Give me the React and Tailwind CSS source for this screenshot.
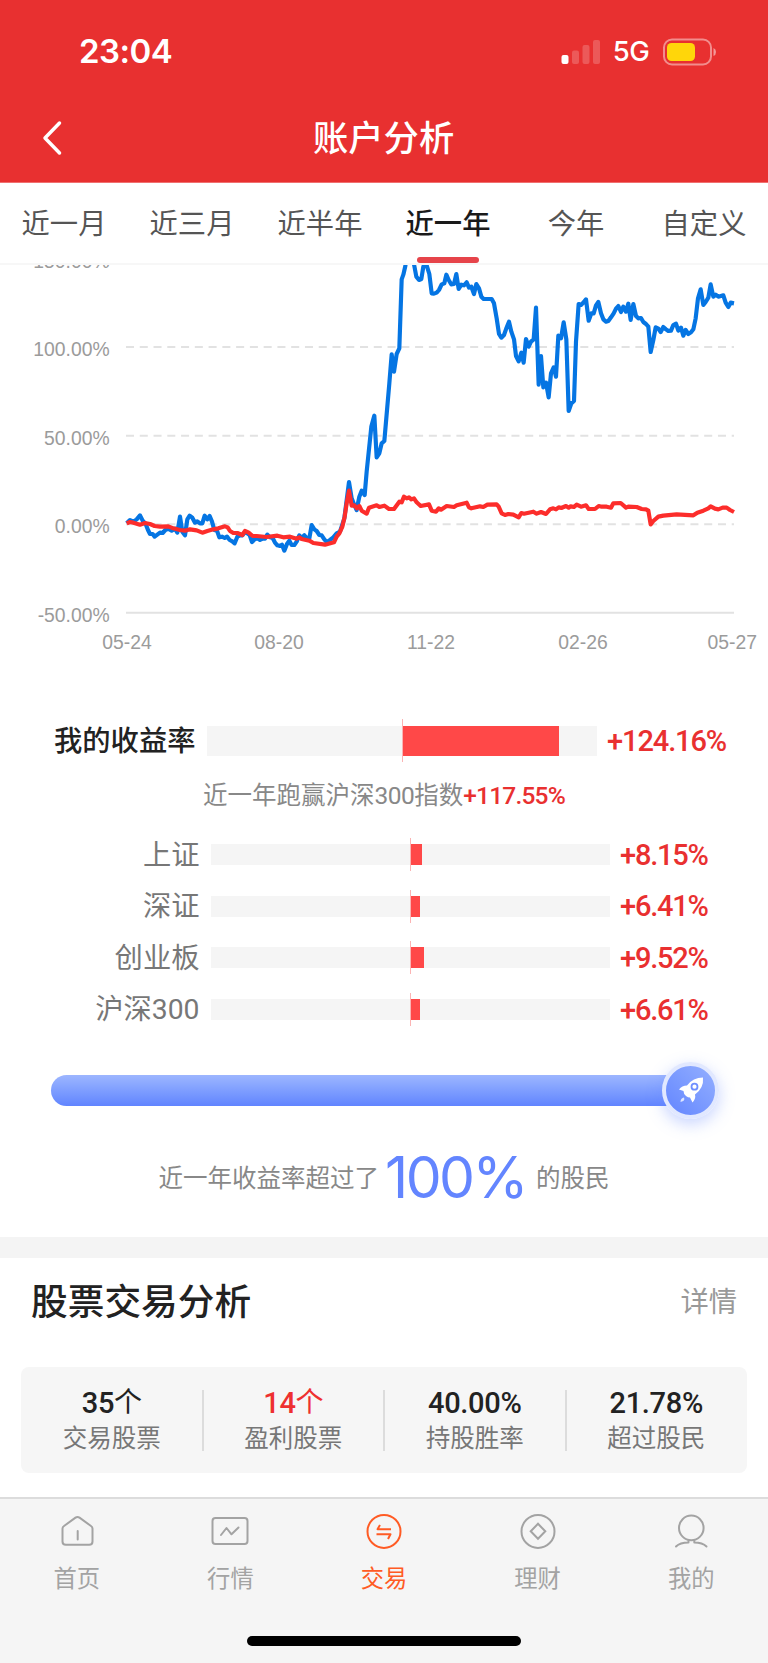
import React, { useState } from "react";

const TABS = ["近一月", "近三月", "近半年", "近一年", "今年", "自定义"];

const INDEXES = [
  { name: "上证", value: "+8.15%", width: 10 },
  { name: "深证", value: "+6.41%", width: 8 },
  { name: "创业板", value: "+9.52%", width: 12 },
  { name: "沪深300", value: "+6.61%", width: 8 },
];

const STATS = [
  { value: "35", unit: "个", label: "交易股票" },
  { value: "14", unit: "个", label: "盈利股票", red: true },
  { value: "40.00%", label: "持股胜率" },
  { value: "21.78%", label: "超过股民" },
];

// chart lines, 3 units = 1px
const MY_LINE =
  "380,820 390,810 400,815 410,808 420,796 428,812 437,822 444,840 450,852 458,852 464,860 472,854 480,848 488,849 496,840 505,836 515,842 525,836 532,848 540,800 547,845 555,856 562,808 569,797 577,803 585,818 592,814 600,820 607,820 614,797 622,808 629,798 636,815 643,840 651,842 658,862 666,860 674,864 681,860 689,870 697,874 704,880 712,860 720,856 727,856 735,846 742,850 749,855 756,876 764,868 772,865 780,870 788,866 795,866 802,854 810,862 818,864 825,878 832,886 840,888 846,884 853,902 861,882 868,872 875,885 883,885 890,875 898,856 905,864 913,856 922,866 928,865 935,825 943,838 950,843 958,855 965,856 973,868 980,876 990,870 1000,862 1010,850 1020,845 1033,805 1047,696 1055,745 1063,765 1070,780 1078,740 1085,722 1094,735 1100,665 1114,530 1123,497 1130,622 1138,610 1145,580 1153,573 1168,400 1175,313 1182,365 1190,312 1198,295 1205,88 1210,74 1216,48 1220,20 1238,20 1243,48 1249,80 1257,90 1264,87 1270,50 1274,40 1280,46 1288,72 1295,130 1302,131 1310,128 1317,120 1325,103 1333,100 1339,74 1346,90 1354,103 1362,102 1369,72 1376,117 1384,104 1392,106 1400,97 1407,113 1414,110 1422,132 1429,102 1437,115 1444,140 1451,147 1475,147 1482,160 1490,205 1497,252 1504,263 1512,255 1519,235 1527,215 1534,245 1542,268 1548,318 1556,334 1564,308 1571,338 1578,267 1586,290 1593,275 1601,268 1608,173 1616,404 1623,318 1630,412 1638,398 1646,442 1653,370 1661,352 1668,380 1675,257 1683,265 1691,217 1699,268 1706,483 1714,460 1722,453 1728,275 1736,162 1743,165 1751,157 1758,148 1766,212 1774,190 1781,190 1788,166 1795,156 1803,190 1810,208 1818,215 1825,213 1833,202 1841,190 1848,176 1855,168 1863,186 1870,170 1878,185 1885,161 1892,210 1900,162 1908,198 1915,205 1923,204 1930,216 1938,222 1945,230 1952,306 1960,270 1967,232 1975,236 1982,246 1990,231 1998,238 2005,243 2013,242 2020,225 2028,221 2035,242 2043,233 2050,257 2057,240 2065,252 2073,247 2080,238 2087,205 2094,145 2102,118 2110,165 2117,156 2125,143 2132,103 2140,140 2147,134 2155,140 2170,136 2177,158 2185,171 2192,158 2202,160";

const INDEX_LINE =
  "380,820 390,816 400,818 420,824 435,819 450,822 464,828 480,830 505,829 520,835 540,840 555,842 570,838 590,841 607,848 622,843 640,838 655,835 675,829 683,832 690,843 700,849 712,849 727,855 735,843 745,847 758,858 770,858 800,861 832,857 850,862 870,860 890,866 898,862 905,867 928,872 940,879 975,884 1002,877 1010,860 1018,850 1027,830 1034,800 1040,760 1047,722 1055,767 1063,766 1070,775 1078,768 1085,782 1100,791 1107,773 1130,766 1138,771 1153,767 1167,777 1182,777 1198,755 1205,757 1212,740 1220,745 1227,742 1234,748 1242,745 1250,757 1262,768 1287,763 1295,782 1308,785 1316,775 1323,779 1340,768 1362,771 1370,766 1400,758 1407,772 1414,775 1440,769 1450,771 1462,764 1490,763 1496,770 1505,790 1515,795 1525,792 1540,794 1556,802 1564,789 1572,791 1600,785 1610,791 1623,786 1638,792 1650,778 1660,775 1668,778 1676,772 1684,774 1698,768 1706,773 1712,769 1722,771 1730,764 1743,770 1758,766 1766,777 1785,777 1796,768 1805,770 1820,770 1833,773 1840,760 1862,759 1878,773 1885,770 1910,771 1925,777 1938,778 1945,782 1952,823 1960,813 1975,800 1990,797 2030,793 2080,796 2092,788 2110,782 2125,775 2132,769 2145,776 2155,778 2168,773 2180,773 2190,780 2202,786";

function StatusBar() {
  return (
    <div className="flex h-[94px] items-center pl-[79px] pr-[51px] pt-[9px] text-white">
      <span className="font-['Inter'] text-[33px] font-semibold leading-none tracking-[-0.5px]">23:04</span>
      <svg className="ml-auto" width="40" height="26" viewBox="0 0 40 26" fill="#fff">
        <rect x="0.5" y="16" width="7" height="9" rx="2" />
        <rect x="11" y="11.500" width="7" height="13.500" rx="2" opacity=".2" />
        <rect x="21.500" y="6" width="7" height="19" rx="2" opacity=".2" />
        <rect x="32" y="1" width="7" height="24" rx="2" opacity=".2" />
      </svg>
      <span className="ml-[12px] font-['Inter'] text-[27.500px] font-medium leading-none tracking-[-0.7px]">5G</span>
      <svg className="ml-[14px]" width="54" height="28" viewBox="0 0 54 28">
        <rect x="1" y="1.500" width="47" height="25" rx="8" fill="none" stroke="#fff" strokeWidth="2" opacity=".45" />
        <rect x="4" y="5" width="28" height="18" rx="4.500" fill="#ffd60a" />
        <path d="M50.500 10 Q53 11 53 14 T50.500 18Z" fill="#fff" opacity=".5" />
      </svg>
    </div>
  );
}

function Chart() {
  return (
    <svg className="block" width="768" height="395" viewBox="0 45 2304 1185" fontFamily="Liberation Sans, Arial, sans-serif" fontSize="58" fill="#9b9b9b">
      <g textAnchor="end">
        <text x="329" y="54">150.00%</text>
        <text x="329" y="318">100.00%</text>
        <text x="329" y="584">50.00%</text>
        <text x="329" y="850">0.00%</text>
        <text x="329" y="1116">-50.00%</text>
      </g>
      <g stroke="#e2e2e2" strokeWidth="6" strokeDasharray="24 17.300">
        <path d="M378 291H2202" />
        <path d="M378 557H2202" />
        <path d="M378 823H2202" />
      </g>
      <path d="M378 1088H2202" stroke="#e2e2e2" strokeWidth="6" />
      <g textAnchor="middle">
        <text x="381" y="1198">05-24</text>
        <text x="837" y="1198">08-20</text>
        <text x="1293" y="1198">11-22</text>
        <text x="1749" y="1198">02-26</text>
        <text x="2197" y="1198">05-27</text>
      </g>
      <g fill="none" strokeWidth="12.500" strokeLinejoin="round">
        <polyline points={MY_LINE} stroke="#0575e3" />
        <polyline points={INDEX_LINE} stroke="#fc2d2b" />
      </g>
    </svg>
  );
}

function IndexRow({ name, value, width }) {
  return (
    <div className="flex h-[51.600px] items-center">
      <span className="w-[199.500px] pt-[2px] text-right text-[28.300px] leading-none text-[#777]">{name}</span>
      <div className="ml-[11.500px] flex h-[33px] w-[399px] items-center bg-[linear-gradient(#f5f5f5,#f5f5f5)] bg-[length:100%_21px] bg-center bg-no-repeat">
        <div className="ml-[199px] h-[33px] w-px bg-[#fbb4b4]" />
        <div className="h-[21px] bg-[#ff4848]" style={{ width: width + 1 }} />
      </div>
      <span className="ml-[10px] pt-px text-[29px] font-medium leading-none tracking-[-1.2px] text-[#e93030]">{value}</span>
    </div>
  );
}

function NavIcon({ name }) {
  return (
    <svg width="40" height="40" viewBox="0 0 40 40" fill="none" stroke="currentColor" strokeWidth="2" strokeLinecap="round" strokeLinejoin="round">
      {name === "首页" && (
        <>
          <path d="M5.500 17.500Q5.500 16 7 15L18.500 6.600Q20.500 5.200 22.500 6.600L34 15Q35.500 16 35.500 17.500V30.500Q35.500 33.800 32.200 33.800H8.800Q5.500 33.800 5.500 30.500Z" />
          <path d="M20.700 20V28.500" />
        </>
      )}
      {name === "行情" && (
        <>
          <rect x="2.500" y="7" width="35" height="26" rx="3" />
          <path d="M11 24L16.500 17L21.500 23.300L28.500 16.500" />
        </>
      )}
      {name === "交易" && (
        <>
          <circle cx="20" cy="20.400" r="16.500" />
          <path d="M16 14L13.500 18.200H27" strokeLinecap="butt" />
          <path d="M12.500 23.300H26.500L24 28" strokeLinecap="butt" />
        </>
      )}
      {name === "理财" && (
        <>
          <circle cx="20" cy="20.400" r="16.500" />
          <path d="M20 12.800L27.300 20.300L20 27.800L12.700 20.300Z" strokeLinejoin="miter" />
        </>
      )}
      {name === "我的" && (
        <>
          <circle cx="20.300" cy="16.900" r="12.300" />
          <path d="M17.500 29.200V31.500Q9 31.500 5 35.500M23.300 29.200V31.500Q31.500 31.500 35.500 35.500" />
        </>
      )}
    </svg>
  );
}

function App() {
  const [tab, setTab] = useState("近一年");
  const [nav, setNav] = useState("交易");

  return (
    <div className="flex h-[1663px] w-[768px] flex-col overflow-hidden bg-white font-['Roboto','Noto_Sans_CJK_SC',sans-serif]">
      {/* Header */}
      <header className="h-[183px] shrink-0 border-b border-[#f07070] bg-[#e83030]">
        <StatusBar />
        <div className="flex h-[88px] items-center pl-[42px] text-white">
          <svg width="20" height="36" viewBox="0 0 20 36" fill="none" stroke="#fff" strokeWidth="3.500" strokeLinecap="round" strokeLinejoin="round">
            <path d="M17.500 3L3 18L17.500 33" />
          </svg>
          <h1 className="ml-[251px] pt-[3px] text-[35.300px] font-medium leading-none">账户分析</h1>
        </div>
      </header>

      {/* Range tabs */}
      <div className="flex h-[82px] shrink-0 border-b-2 border-[#f7f7f7]">
        {TABS.map((t) => (
          <button
            key={t}
            onClick={() => setTab(t)}
            className={`flex w-[128px] flex-col items-center text-[28.300px] leading-[84px] ${t === tab ? "font-medium text-[#1a1a1a]" : "text-[#555]"}`}
          >
            <span className="h-[74px]">{t}</span>
            {t === tab && <span className="h-[6px] w-[62px] rounded-full bg-[#e6444a]" />}
          </button>
        ))}
      </div>

      <Chart />

      {/* Yield compare */}
      <section className="h-[577px] shrink-0 pt-[58px]">
        <div className="flex h-[45px] items-center">
          <span className="w-[195.500px] pt-[3px] text-right text-[28.300px] font-medium leading-none text-[#222]">我的收益率</span>
          <div className="ml-[11.500px] flex h-[43px] w-[390px] items-center bg-[linear-gradient(#f5f5f5,#f5f5f5)] bg-[length:100%_30px] bg-center bg-no-repeat">
            <div className="ml-[195px] h-[43px] w-px bg-[#fbb4b4]" />
            <div className="h-[30px] w-[156px] bg-[#ff4848]" />
          </div>
          <span className="ml-[10px] pt-px text-[29px] font-medium leading-none tracking-[-1.1px] text-[#e93030]">+124.16%</span>
        </div>
        <p className="mt-[17px] flex h-[32px] items-center justify-center text-[24.500px] leading-none text-[#888]">
          <span>近一年跑赢沪深</span>
          <span className="tracking-[-0.5px]">300</span>
          <span>指数</span>
          <b className="font-medium tracking-[-0.8px] text-[#e93030]">+117.55%</b>
        </p>
        <div className="mt-[17px]">
          {INDEXES.map((item) => (
            <IndexRow key={item.name} {...item} />
          ))}
        </div>

        {/* Rank slider */}
        <div className="mt-[25px] flex h-[60px] items-center pl-[51px]">
          <div className="h-[31px] w-[625px] rounded-l-full bg-gradient-to-b from-[#9db6ff] to-[#6184ff]" />
          <div className="-ml-[14px] flex size-[57px] items-center justify-center rounded-full border-[4px] border-[#e1e8ff] bg-gradient-to-bl from-[#94afff] to-[#6385ff] shadow-[0_5px_16px_rgba(98,132,255,0.35)]">
            <svg width="30" height="30" viewBox="0 0 30 30">
              <path d="M27 2.500Q17 2.500 11 10.500Q6 10.500 3 14.500L7.500 16Q7.500 19 10 21Q12 22.500 14 22.500L16.500 27.500Q20 23.500 19 19.500Q28 13 27 2.500Z" fill="#fff" />
              <circle cx="18.500" cy="11.700" r="3" fill="#fff" stroke="#6f8fff" strokeWidth="1.800" />
              <path d="M8 22.500Q9.500 26 4.500 27Q4.500 23 8 22.500Z" fill="#dfe6ff" />
            </svg>
          </div>
        </div>
        <p className="mt-[27px] flex h-[60px] items-center justify-center text-[24.500px] leading-none text-[#888]">
          <span className="pt-[3px]">近一年收益率超过了</span>
          <span className="ml-[6px] mr-[10px] font-['Inter'] text-[57px] font-normal tracking-[-2.500px] text-[#6385ff]">100%</span>
          <span className="pt-[3px]">的股民</span>
        </p>
      </section>

      {/* Trade analysis */}
      <section className="h-[260px] shrink-0 border-t-[21px] border-[#f4f4f4] px-[21px]">
        <div className="flex h-[86px] items-center justify-between pl-[10px] pr-[10px] pt-[2px]">
          <h2 className="pt-[2px] text-[36.700px] font-medium leading-none text-[#222]">股票交易分析</h2>
          <span className="pt-[3px] text-[28.300px] leading-none text-[#999]">详情</span>
        </div>
        <div className="mt-[23px] flex h-[106px] items-center rounded-[8px] bg-[#f6f6f6]">
          {STATS.map((s) => (
            <div key={s.label} className="-ml-px mr-px flex h-[61px] flex-1 flex-col items-center justify-center gap-[9px] border-l-2 border-[#dcdcdc] first:border-transparent">
              <span className={`flex h-[29px] items-center text-[29px] font-medium leading-none tracking-[-0.3px] ${s.red ? "text-[#ee3030]" : "text-[#222]"}`}>
                {s.value}
                {s.unit && <span className="text-[28px] font-normal">{s.unit}</span>}
              </span>
              <span className="text-[24.500px] leading-none text-[#777]">{s.label}</span>
            </div>
          ))}
        </div>
      </section>

      {/* Bottom nav */}
      <nav className="flex h-[166px] shrink-0 flex-col border-t-2 border-[#dcdcdc] bg-[#f5f5f5]">
        <div className="flex pt-[12px]">
          {["首页", "行情", "交易", "理财", "我的"].map((n) => (
            <button key={n} onClick={() => setNav(n)} className={`flex flex-1 flex-col items-center gap-[17px] ${n === nav ? "text-[#ff5b24]" : "text-[#a3a3a3]"}`}>
              <NavIcon name={n} />
              <span className="text-[23.300px] leading-none">{n}</span>
            </button>
          ))}
        </div>
        <div className="mx-auto mb-[17px] mt-auto h-[10px] w-[274px] rounded-full bg-black" />
      </nav>
    </div>
  );
}

export default App;
